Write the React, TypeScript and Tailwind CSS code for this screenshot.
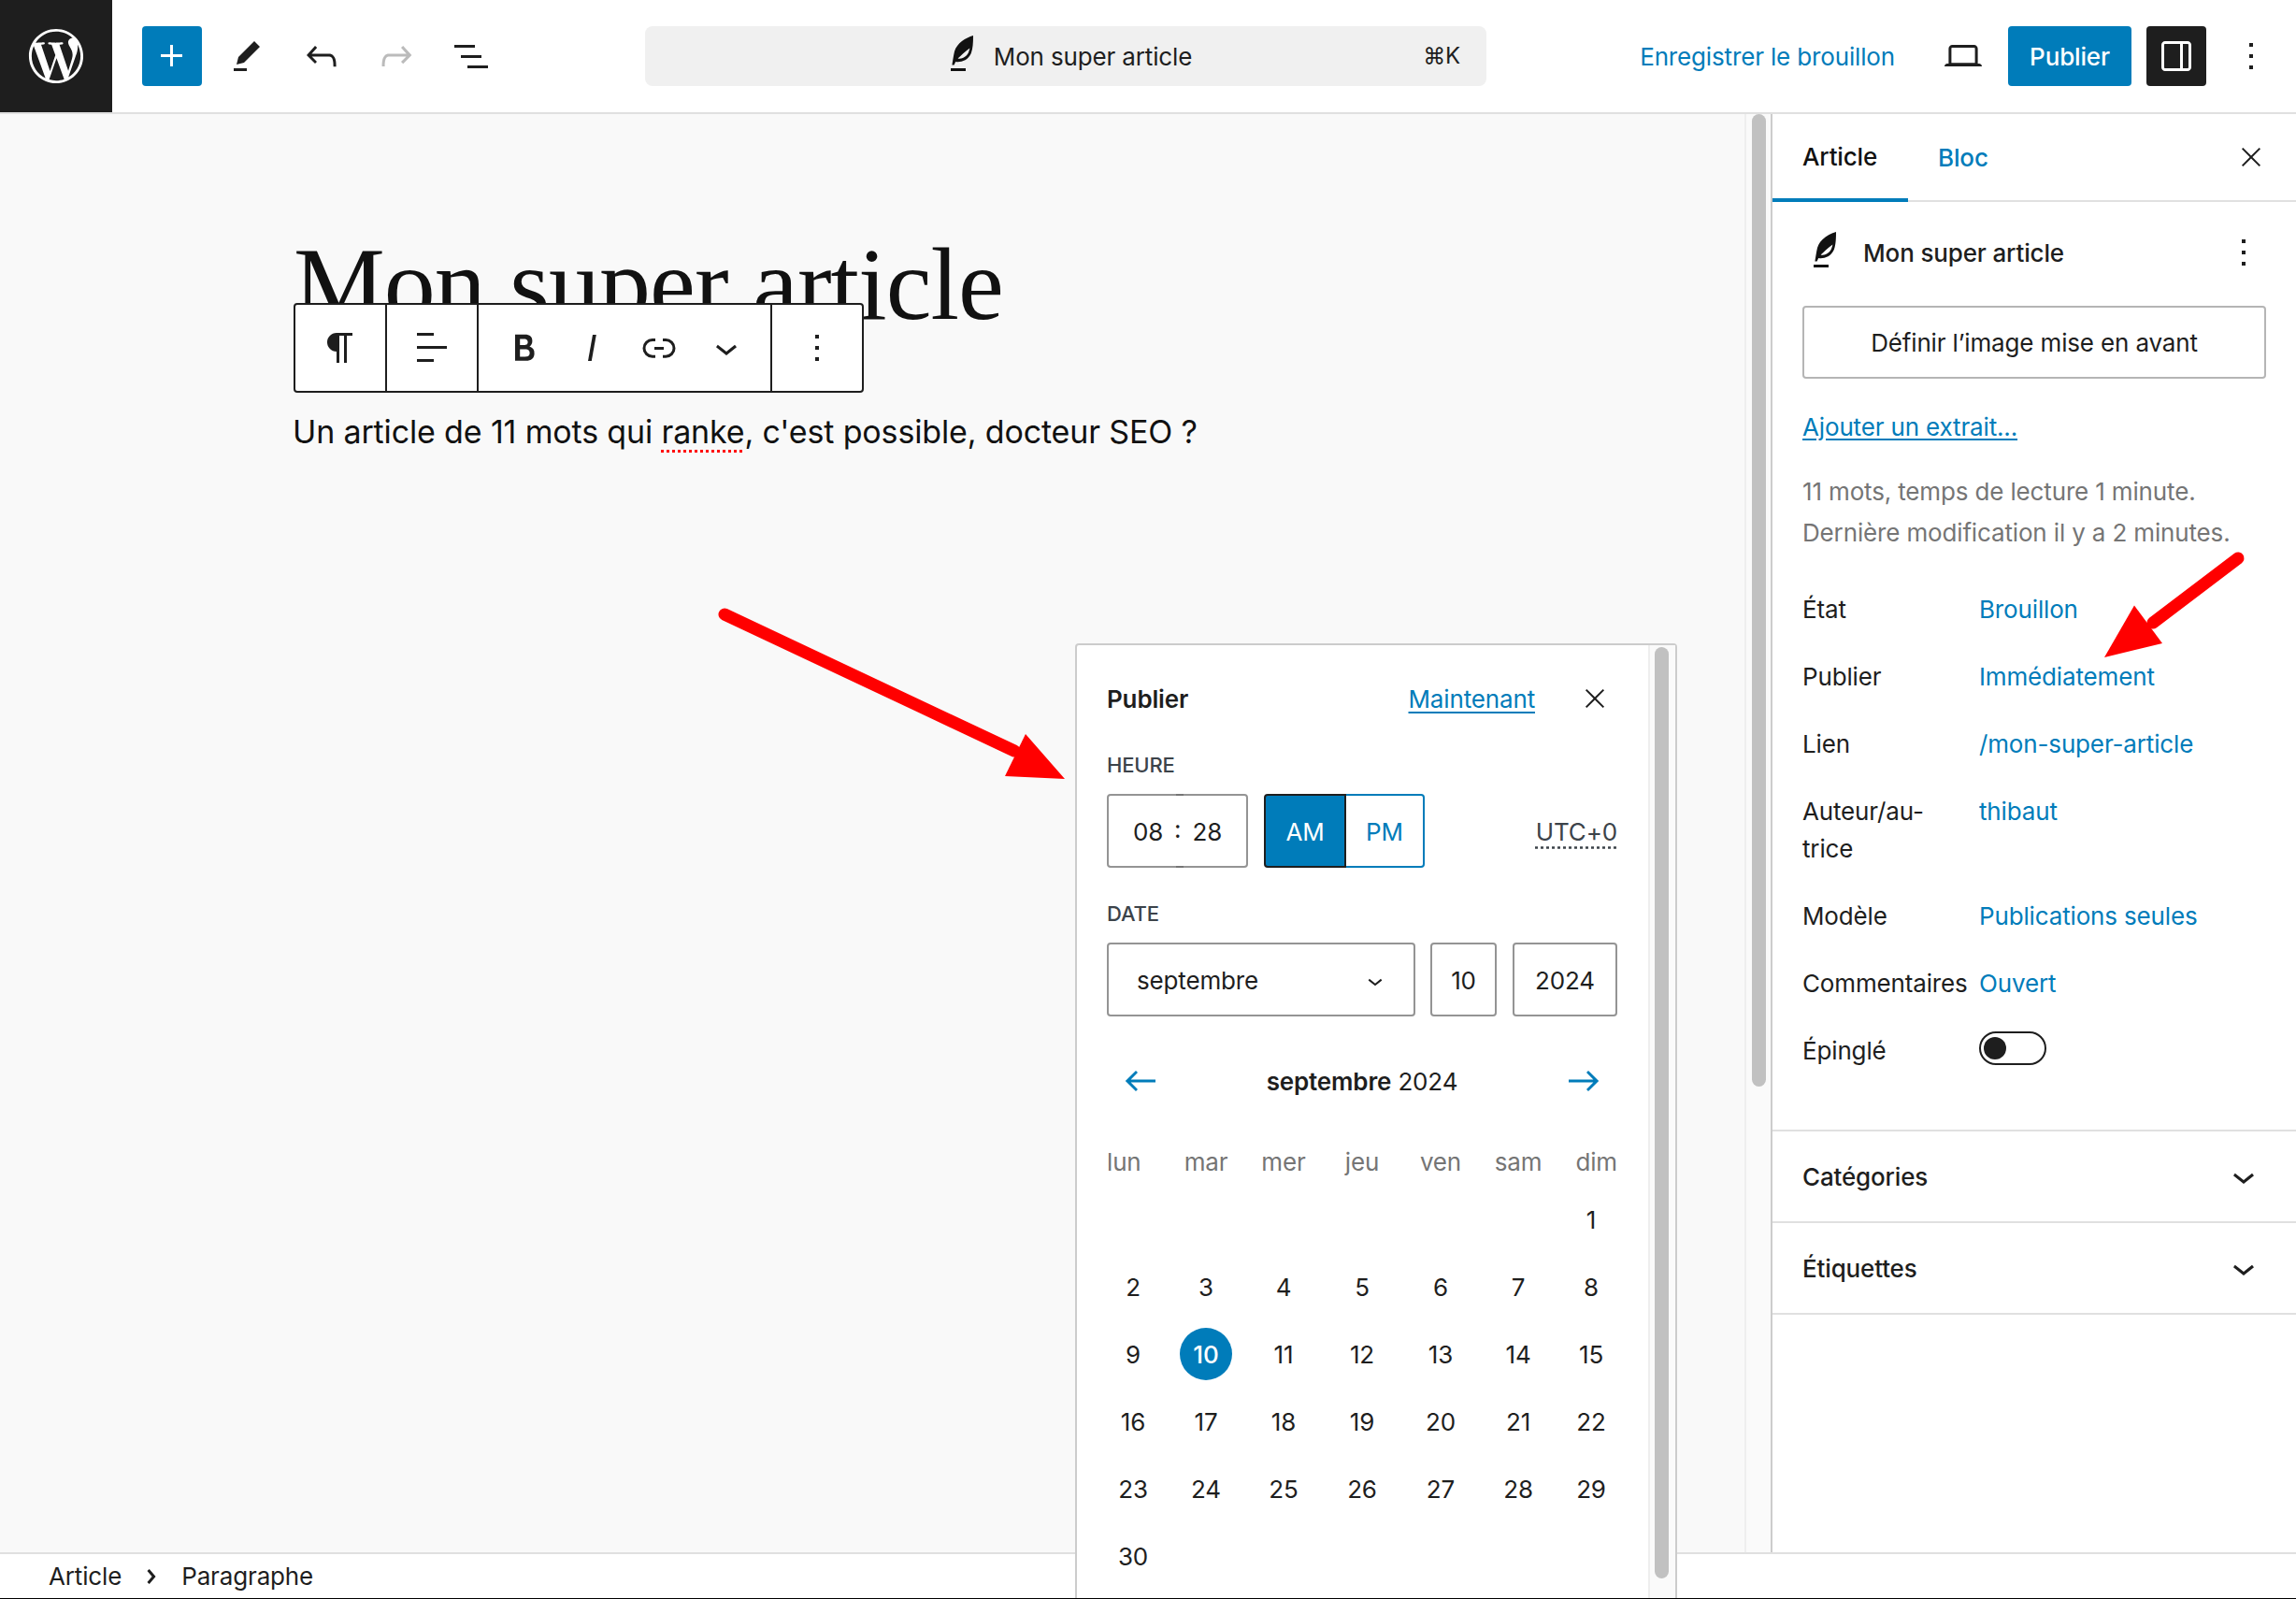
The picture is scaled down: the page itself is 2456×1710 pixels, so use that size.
import { FaWordpressSimple } from "react-icons/fa";

const paths = {
  plus: "M11 12.5V17.5H12.5V12.5H17.5V11H12.5V6H11V11H6V12.5H11Z",
  pencil: "m19 7-3-3-8.5 8.5-1 4 4-1L19 7Zm-7 11.5H5V20h7v-1.5Z",
  undo: "M18.3 11.7c-.6-.6-1.4-.9-2.3-.9H6.7l2.9-3.3-1.1-1-4.5 5L8.5 16l1-1-2.7-2.7H16c.5 0 .9.2 1.3.5 1 1 1 3.4 1 4.5v.3h1.5v-.2c0-1.5 0-4.3-1.5-5.7z",
  redo: "M15.6 6.5l-1.1 1 2.9 3.3H8c-.9 0-1.7.3-2.3.9-1.4 1.5-1.4 4.2-1.4 5.6v.2h1.5v-.3c0-1.1 0-3.5 1-4.5.3-.3.7-.5 1.3-.5h9.2L14.5 15l1.1 1.1 4.6-4.6-4.6-5z",
  list: "M3 6h11v1.5H3V6Zm3.5 5.5h11V13h-11v-1.5ZM21 17H10v1.5h11V17Z",
  laptop: "M20.5 16h-.7V8c0-1.1-.9-2-2-2H6.2c-1.1 0-2 .9-2 2v8h-.7c-.8 0-1.5.7-1.5 1.5h20c0-.8-.7-1.5-1.5-1.5zM5.7 8c0-.3.2-.5.5-.5h11.6c.3 0 .5.2.5.5v7.6H5.7V8z",
  drawer: "M18 4H6c-1.1 0-2 .9-2 2v12c0 1.1.9 2 2 2h12c1.1 0 2-.9 2-2V6c0-1.1-.9-2-2-2zm-4 14.5H6c-.3 0-.5-.2-.5-.5V6c0-.3.2-.5.5-.5h8v13zm4.5-.5c0 .3-.2.5-.5.5h-2.5v-13H18c.3 0 .5.2.5.5v12z",
  more: "M13 19h-2v-2h2v2zm0-6h-2v-2h2v2zm0-6h-2V5h2v2z",
  close: "m13.06 12 6.47-6.47-1.06-1.06L12 10.94 5.53 4.47 4.47 5.53 10.94 12l-6.47 6.47 1.06 1.06L12 13.06l6.47 6.47 1.06-1.06L13.06 12Z",
  chevronDown: "M17.5 11.6L12 16l-5.5-4.4.9-1.2L12 14l4.5-3.6 1 1.2z",
  chevronRight: "M10.8622 8.04053L14.2805 12.0286L10.8622 16.0167L9.72327 15.0405L12.3049 12.0286L9.72327 9.01672L10.8622 8.04053Z",
  arrowLeft: "M20 11.2H6.8l3.7-3.7-1-1L3.9 12l5.6 5.5 1-1-3.7-3.7H20z",
  arrowRight: "m14.5 6.5-1 1 3.7 3.7H4v1.6h13.2l-3.7 3.7 1 1 5.6-5.5z",
  paragraph: "m9.99609 14v-.2251l.00391.0001v6.225h1.5v-14.5h2.5v14.5h1.5v-14.5h3v-1.5h-8.50391c-2.76142 0-5 2.23858-5 5 0 2.7614 2.23858 5 5 5z",
  alignLeft: "M13 5.5H4V4h9v1.5Zm7 7H4V11h16v1.5Zm-7 7H4V18h9v1.5Z",
  bold: "M14.7 11.3c1-.6 1.5-1.6 1.5-3 0-2.3-1.3-3.4-4-3.4H7v14h5.8c1.4 0 2.5-.3 3.3-1 .8-.7 1.2-1.7 1.2-2.9.1-1.9-.8-3.1-2.6-3.7zm-5.1-4h2.3c.6 0 1.1.1 1.4.4.3.3.5.7.5 1.2s-.2 1-.5 1.2c-.3.3-.8.4-1.4.4H9.6V7.3zm4.6 9c-.4.3-1 .4-1.7.4H9.6v-3.9h2.9c.7 0 1.3.2 1.7.5.4.3.6.8.6 1.5s-.2 1.2-.6 1.5z",
  italic: "M12.5 5L10 19h1.9l2.5-14z",
  link: "M10 17.389H8.444A5.194 5.194 0 1 1 8.444 7H10v1.5H8.444a3.694 3.694 0 0 0 0 7.389H10v1.5ZM14 7h1.556a5.194 5.194 0 0 1 0 10.39H14v-1.5h1.556a3.694 3.694 0 0 0 0-7.39H14V7Zm-4.5 6h5v-1.5h-5V13Z",
};

function Icon({ name, className = "w-12 h-12 fill-[#1e1e1e]" }: { name: keyof typeof paths; className?: string }) {
  return (
    <svg viewBox="0 0 24 24" className={className}>
      <path d={paths[name]} />
    </svg>
  );
}

// quill used for the post title, no matching icon in the packages
function Quill() {
  return (
    <svg viewBox="0 0 24 24" className="w-12 h-12 fill-[#111]">
      <path
        fillRule="evenodd"
        d="M18 1C14 2.200 9.300 5 8 9.500 7.500 11.500 7.200 14 6.700 16.800h1.100l.8-1.800c2.400.5 6.600-.5 8.300-4.500.9-2.500 1.100-5.500 1.100-9.500ZM9.800 13.300c1.400-1.500 4-3.800 6.400-5.600-.4 1.800-1 3.300-2 4.200-1.400 1.300-3 1.700-4.400 1.400Z"
      />
      <path d="M6 18.500h8V20H6z" />
    </svg>
  );
}

const rows = [
  { label: "État", value: "Brouillon" },
  { label: "Publier", value: "Immédiatement" },
  { label: "Lien", value: "/mon-super-article" },
  { label: "Auteur/au-\ntrice", value: "thibaut" },
  { label: "Modèle", value: "Publications seules" },
  { label: "Commentaires", value: "Ouvert" },
];

const weekdays = ["lun", "mar", "mer", "jeu", "ven", "sam", "dim"];
const days = Array.from({ length: 30 }, (_, i) => i + 1);

function Header() {
  return (
    <header className="h-[122px] shrink-0 flex items-center bg-white border-b-2 border-[#e0e0e0]">
      <div className="w-[120px] h-[120px] bg-[#1e1e1e] flex items-center justify-center">
        <FaWordpressSimple className="w-[60px] h-[60px] text-white" />
      </div>
      <div className="ml-8 flex gap-4">
        <button className="w-16 h-16 rounded-[4px] bg-[#007cba] flex items-center justify-center">
          <Icon name="plus" className="w-12 h-12 fill-white" />
        </button>
        {(["pencil", "undo", "redo", "list"] as const).map((n) => (
          <button key={n} className="w-16 h-16 flex items-center justify-center">
            <Icon name={n} className={n === "redo" ? "w-12 h-12 fill-[#bbbbbb]" : "w-12 h-12 fill-[#1e1e1e]"} />
          </button>
        ))}
      </div>
      <div className="ml-[154px] w-[900px] h-16 rounded-lg bg-[#f0f0f0] relative flex items-center justify-center">
        <Quill />
        <span className="ml-[10px] text-[26px]">Mon super article</span>
        <span className="absolute right-[28px] text-[24px]">⌘K</span>
      </div>
      <div className="flex-1" />
      <span className="text-[26px] text-[#007cba]">Enregistrer le brouillon</span>
      <button className="ml-[41px] w-16 h-16 flex items-center justify-center">
        <Icon name="laptop" />
      </button>
      <button className="ml-4 w-[132px] h-16 rounded-[4px] bg-[#007cba] text-white text-[26px] font-medium">Publier</button>
      <button className="ml-4 w-16 h-16 rounded-[4px] bg-[#1e1e1e] flex items-center justify-center">
        <Icon name="drawer" className="w-12 h-12 fill-white" />
      </button>
      <button className="ml-4 mr-4 w-16 h-16 flex items-center justify-center">
        <Icon name="more" />
      </button>
    </header>
  );
}

function BlockToolbar() {
  return (
    <div className="absolute left-[314px] top-[202px] h-[96px] w-[610px] flex items-stretch bg-white border-2 border-[#1e1e1e] rounded-[4px]">
      <div className="w-[98px] border-r-2 border-[#1e1e1e] flex items-center justify-center">
        <Icon name="paragraph" />
      </div>
      <div className="w-[98px] border-r-2 border-[#1e1e1e] flex items-center justify-center">
        <Icon name="alignLeft" />
      </div>
      <div className="w-[314px] border-r-2 border-[#1e1e1e] flex items-center pl-[25px] gap-[24px]">
        <Icon name="bold" />
        <Icon name="italic" />
        <Icon name="link" />
        <Icon name="chevronDown" />
      </div>
      <div className="flex-1 flex items-center justify-center">
        <Icon name="more" />
      </div>
    </div>
  );
}

function Canvas() {
  return (
    <div className="flex-1 relative bg-[#f9f9f9] min-w-0">
      <div className="pl-[314px] pt-[116px]">
        <h1 className="font-['Liberation_Serif',serif] text-[110px] leading-[132px] text-[#111] tracking-[-1px] font-normal">Mon super article</h1>
        <p className="mt-[68px] -ml-[1px] text-[34px] leading-[48px] text-[#111]">
          Un article de 11 mots qui{" "}
          <span className="underline decoration-dotted decoration-[#ff0000] decoration-[3px] underline-offset-[7px]">ranke</span>, c'est possible, docteur SEO ?
        </p>
      </div>
      <BlockToolbar />
      <div className="absolute right-0 top-0 bottom-0 w-[28px] bg-[#fafafa] border-l-2 border-[#eeeeee]">
        <div className="ml-[6px] w-[15px] h-[1040px] rounded-full bg-[#c1c1c1]" />
      </div>
    </div>
  );
}

function Sidebar() {
  return (
    <aside className="w-[562px] shrink-0 bg-white border-l-2 border-[#cccccc]">
      <div className="h-[94px] flex items-stretch border-b-2 border-[#e0e0e0] relative">
        <div className="w-[145px] pl-8 flex items-center font-medium text-[26px] border-b-4 border-[#007cba] -mb-[2px] text-[#111]">Article</div>
        <div className="pl-8 flex items-center text-[26px] font-medium text-[#007cba]">Bloc</div>
        <div className="ml-auto mr-8 flex items-center">
          <Icon name="close" className="w-8 h-8 fill-[#1e1e1e]" />
        </div>
      </div>
      <div className="px-8 pb-[64px] border-b-2 border-[#e0e0e0]">
        <div className="mt-[30px] h-12 flex items-center">
          <Quill />
          <span className="ml-[17px] text-[26px] font-medium">Mon super article</span>
          <span className="ml-auto"><Icon name="more" /></span>
        </div>
        <button className="mt-[33px] w-full h-[78px] border-2 border-[#b5b5b5] rounded-[4px] text-[26px]">Définir l’image mise en avant</button>
        <div className="mt-[32px] leading-[40px] text-[26px] text-[#007cba] underline underline-offset-[3px]">Ajouter un extrait...</div>
        <div className="mt-[27px] text-[26px] leading-[44px] text-[#757575]">
          <div>11 mots, temps de lecture 1 minute.</div>
          <div>Dernière modification il y a 2 minutes.</div>
        </div>
        <div className="mt-[40px] flex flex-col gap-8">
          {rows.map((r) => (
            <div key={r.value} className="flex text-[26px] leading-[40px]">
              <div className="w-[189px] whitespace-pre-line">{r.label}</div>
              <div className="text-[#007cba]">{r.value}</div>
            </div>
          ))}
          <div className="flex text-[26px] leading-[40px]">
            <div className="w-[189px]">Épinglé</div>
            <div className="mt-[-1px] w-[72px] h-[36px] rounded-full border-2 border-[#1e1e1e] flex items-center pl-[3px]">
              <div className="w-6 h-6 rounded-full bg-[#1e1e1e]" />
            </div>
          </div>
        </div>
      </div>
      {["Catégories", "Étiquettes"].map((t) => (
        <div key={t} className="h-[98px] border-b-2 border-[#e0e0e0] px-8 flex items-center justify-between">
          <span className="text-[26px] font-medium">{t}</span>
          <Icon name="chevronDown" />
        </div>
      ))}
    </aside>
  );
}

function DatePopover() {
  return (
    <div className="absolute left-[1150px] top-[688px] w-[644px] h-[1021px] bg-white border-2 border-b-0 border-[#cccccc] rounded-t-[4px] flex">
      <div className="w-[611px] pl-8 pr-[33px] pt-[33px]">
        <div className="h-12 flex items-center">
          <span className="text-[26px] font-semibold">Publier</span>
          <span className="ml-auto text-[26px] text-[#007cba] underline underline-offset-[4px]">Maintenant</span>
          <span className="ml-[48px] mr-[8px] w-8 flex justify-center"><Icon name="close" className="w-8 h-8 fill-[#1e1e1e]" /></span>
        </div>
        <div className="mt-[31px] text-[22px] leading-[32px] font-medium text-[#3c434a]">HEURE</div>
        <div className="mt-[15px] flex items-stretch h-[79px] text-[26px]">
          <div className="relative w-[151px] rounded-[4px] border-2 border-[#949494] flex items-center justify-center gap-[12px] pt-[2px]">
            <span>08</span>
            <span className="-mt-[6px]">:</span>
            <span>28</span>
            <div className="absolute -top-[2px] left-[72px] w-2 h-[2px] bg-[#757575]" />
            <div className="absolute -bottom-[2px] left-[72px] w-2 h-[2px] bg-[#757575]" />
          </div>
          <div className="ml-[17px] w-[88px] rounded-l-[4px] bg-[#007cba] border-2 border-[#1e1e1e] text-white flex items-center justify-center pt-[2px]">AM</div>
          <div className="w-[84px] rounded-r-[4px] border-2 border-l-0 border-[#007cba] text-[#007cba] flex items-center justify-center pt-[2px]">PM</div>
          <div className="ml-auto flex items-center pt-[2px]">
            <span className="text-[#3c434a] underline decoration-dotted underline-offset-[6px]">UTC+0</span>
          </div>
        </div>
        <div className="mt-[33px] text-[22px] leading-[32px] font-medium text-[#3c434a]">DATE</div>
        <div className="mt-[15px] flex h-[79px] text-[26px]">
          <div className="w-[330px] rounded-[4px] border-2 border-[#949494] flex items-center pl-[30px] pr-[25px] justify-between pt-[2px]">
            <span>septembre</span>
            <Icon name="chevronDown" className="w-8 h-8 fill-[#1e1e1e]" />
          </div>
          <div className="ml-4 w-[71px] rounded-[4px] border-2 border-[#949494] flex items-center justify-center pt-[2px]">10</div>
          <div className="ml-[17px] flex-1 rounded-[4px] border-2 border-[#949494] flex items-center justify-center pt-[2px]">2024</div>
        </div>
        <div className="mt-[45px] h-12 flex items-center justify-between px-[12px] text-[26px]">
          <Icon name="arrowLeft" className="w-12 h-12 fill-[#007cba]" />
          <span><span className="font-semibold">septembre</span> 2024</span>
          <Icon name="arrowRight" className="w-12 h-12 fill-[#007cba]" />
        </div>
        <div className="mt-[43px] grid grid-cols-[56px_100px_66px_102px_66px_100px_56px] text-[26px] leading-[40px] text-[#757575]">
          {weekdays.map((w, i) => (
            <div key={w} className={i === 0 ? "text-left" : i === 6 ? "text-right" : "text-center"}>{w}</div>
          ))}
        </div>
        <div className="mt-[5px] grid grid-cols-[56px_100px_66px_102px_66px_100px_56px] auto-rows-[72px] text-[26px]">
          <div className="col-span-6" />
          {days.map((d) => (
            <div key={d} className="flex items-center justify-center">
              {d === 10 ? (
                <div className="w-14 h-14 rounded-full bg-[#007cba] text-white font-medium flex items-center justify-center">10</div>
              ) : (
                d
              )}
            </div>
          ))}
        </div>
      </div>
      <div className="flex-1 bg-[#fafafa] border-l-2 border-[#eeeeee] pt-[2px] pl-[5px]">
        <div className="w-[15px] h-[996px] rounded-full bg-[#c1c1c1]" />
      </div>
    </div>
  );
}

export default function App() {
  return (
    <div className="relative w-[2456px] h-[1710px] overflow-hidden flex flex-col bg-white font-[Inter,sans-serif] tracking-[-0.15px] text-[#1e1e1e]">
      <Header />
      <div className="flex-1 flex min-h-0">
        <Canvas />
        <Sidebar />
      </div>
      <footer className="h-[50px] shrink-0 bg-white border-t-2 border-[#e0e0e0] border-b-[1px] border-b-black flex items-center pl-[52px] text-[26px]">
        <span>Article</span>
        <span className="mx-2"><Icon name="chevronRight" /></span>
        <span>Paragraphe</span>
      </footer>
      <DatePopover />
      <svg className="absolute left-[760px] top-[645px] w-[385px] h-[195px]" viewBox="0 0 385 195">
        <line x1="15" y1="12" x2="325" y2="158" stroke="#ff0000" strokeWidth="13" strokeLinecap="round" />
        <polygon points="379,188 337,140 315,185" fill="#ff0000" />
      </svg>
      <svg className="absolute left-[2245px] top-[585px] w-[160px] h-[125px]" viewBox="0 0 160 125">
        <line x1="149" y1="12" x2="58" y2="81" stroke="#ff0000" strokeWidth="13" strokeLinecap="round" />
        <polygon points="6,118 38,62.5 68,103" fill="#ff0000" />
      </svg>
    </div>
  );
}
